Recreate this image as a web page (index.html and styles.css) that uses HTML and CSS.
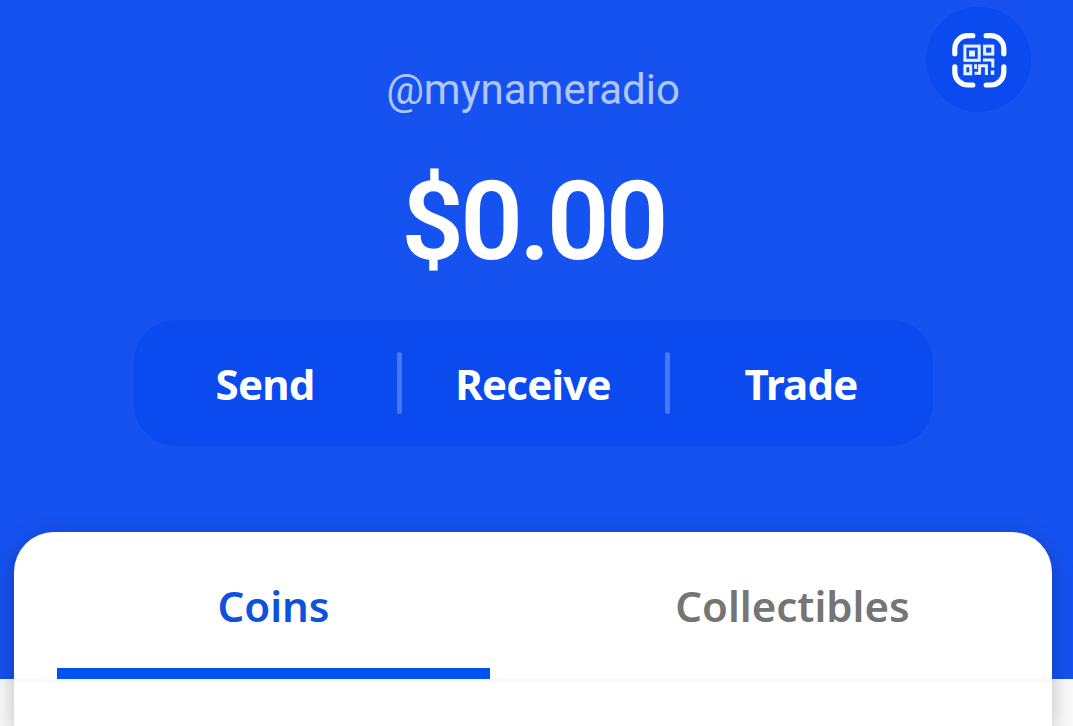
FILE: index.html
```html
<!DOCTYPE html>
<html lang="en">
<head>
    <meta charset="UTF-8">
    <meta name="viewport" content="width=device-width, initial-scale=1.0">
    <title>Wallet</title>
    <link rel="stylesheet" href="styles.css">
</head>
<body>
    <header class="wallet-header">
        <div class="top-bar">
            <div class="username">@mynameradio</div>
            <button class="scan-btn" aria-label="Scan QR code">
                <svg class="scan-icon" viewBox="0 0 62 62">
                    <g fill="none" stroke="#fff" stroke-width="5.2" stroke-linecap="round">
                        <path d="M6.8 24.7V19.5A13 13 0 0 1 19.8 6.7H24.8"/>
                        <path d="M38.2 6.7H43A13 13 0 0 1 55.8 19.5V24.7"/>
                        <path d="M55.8 37.9V43A13 13 0 0 1 43 56H38.2"/>
                        <path d="M24.8 56H19.8A13 13 0 0 1 6.8 43V37.9"/>
                    </g>
                    <g fill="none" stroke="#e8f2ff" stroke-width="3">
                        <rect x="16.9" y="17.1" width="14.3" height="14.2"/>
                        <rect x="36.6" y="17.1" width="8.2" height="8"/>
                        <rect x="16.9" y="36.8" width="5.8" height="8"/>
                        <path d="M35 30.9H44.8V38.5"/>
                        <path d="M27.6 35.3V40"/>
                        <path d="M26.6 44.3H31.6V36.8H38.4V46"/>
                    </g>
                    <path fill="#e8f2ff" d="M21 21.5h6v6h-6zM42.8 41.5h3.5v4.3h-3.5z"/>
                </svg>
            </button>
        </div>
        <div class="balance">$0.00</div>
        <div class="actions">
            <button class="action">Send</button>
            <span class="divider"></span>
            <button class="action">Receive</button>
            <span class="divider"></span>
            <button class="action">Trade</button>
        </div>
    </header>
    <main class="assets">
        <nav class="tabs">
            <a class="tab active">Coins</a>
            <a class="tab">Collectibles</a>
        </nav>
    </main>
</body>
</html>
```

FILE: styles.css
```css
* {
    box-sizing: border-box;
}
body {
    margin: 0;
    background-color: #fafafa;
    font-family: "Noto Sans", "Open Sans", sans-serif;
}
button {
    padding: 0;
    border: none;
    background: none;
    font-family: inherit;
    cursor: pointer;
}
.wallet-header {
    height: 679px;
    padding: 7px 21px 0 14px;
    background-color: #1652f0;
}
.top-bar {
    display: grid;
    grid-template-columns: 1fr auto 1fr;
    height: 105px;
}
.username {
    grid-column: 2;
    padding-top: 58px;
    font-family: Roboto, sans-serif;
    font-size: 42px;
    line-height: 50px;
    color: #b0c6fb;
}
.scan-btn {
    display: flex;
    align-items: center;
    justify-content: center;
    justify-self: end;
    width: 105px;
    height: 105px;
    margin-right: 21px;
    border-radius: 50%;
    background-color: #0a4aee;
}
.scan-icon {
    width: 62px;
    height: 62px;
}
.balance {
    height: 130px;
    margin-top: 45px;
    font-family: Roboto, sans-serif;
    font-size: 110px;
    font-weight: 600;
    line-height: 130px;
    letter-spacing: -3.8px;
    text-align: center;
    color: #fff;
}
.actions {
    display: flex;
    align-items: center;
    width: 799px;
    height: 126px;
    margin: 33px auto 0;
    border-radius: 42px;
    background-color: #0a4aee;
}
.action {
    flex: 1;
    height: 100%;
    font-size: 42px;
    font-weight: 700;
    letter-spacing: -0.8px;
    color: #fff;
}
.divider {
    width: 5px;
    height: 62px;
    border-radius: 3px;
    background-color: #4678f6;
}
.assets {
    position: relative;
    height: 194px;
    margin: -147px 21px 0 14px;
    border-radius: 40px 40px 0 0;
    background-color: #fff;
    box-shadow: 0 6px 22px rgba(0, 0, 0, 0.25);
}
.tabs {
    display: flex;
    height: 150px;
    border-bottom: 3px solid #f7f8fa;
}
.tab {
    flex: 1;
    display: flex;
    align-items: center;
    justify-content: center;
    margin: 0 43px;
    padding-top: 11px;
    border-bottom: 11px solid transparent;
    font-size: 42px;
    font-weight: 600;
    color: #757575;
}
.tab.active {
    border-bottom-color: #0052f0;
    color: #0c52dc;
}
```
